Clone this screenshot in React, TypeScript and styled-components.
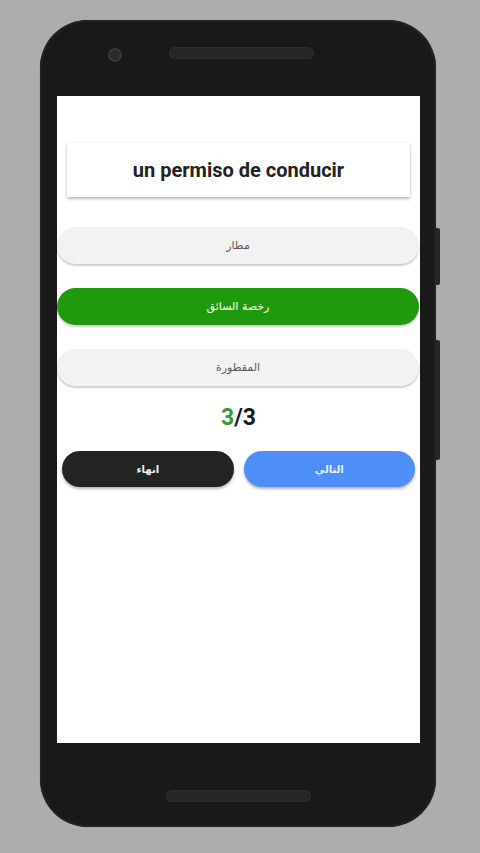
import React from 'react'
import styled, { createGlobalStyle } from 'styled-components'

const GlobalStyle = createGlobalStyle`
    html, body {
        margin: 0;
        padding: 0;
        background: #adadad;
        font-family: Roboto, "Noto Sans", "DejaVu Sans", sans-serif;
    }
`

interface IOption {
    label: string
    correct?: boolean
}

const options: IOption[] = [
    { label: 'مطار' },
    { label: 'رخصة السائق', correct: true },
    { label: 'المقطورة' },
]

export default function App() {
    return (
        <Page>
            <GlobalStyle />
            <Phone>
                <SideButton $top={208} $height={57} />
                <SideButton $top={320} $height={120} />

                <TopBezel>
                    <Camera />
                    <Speaker />
                </TopBezel>

                <Screen>
                    <WordCard>un permiso de conducir</WordCard>

                    <OptionList>
                        {options.map((option) => (
                            <OptionButton key={option.label} $correct={option.correct}>
                                {option.label}
                            </OptionButton>
                        ))}
                    </OptionList>

                    <Counter>
                        <span className='current'>3</span>/3
                    </Counter>

                    <ActionRow>
                        <ActionButton $variant='dark'>انهاء</ActionButton>
                        <ActionButton $variant='blue'>التالي</ActionButton>
                    </ActionRow>
                </Screen>

                <BottomBezel>
                    <Speaker />
                </BottomBezel>
            </Phone>
        </Page>
    )
}

const Page = styled.div`
    display: flex;
    justify-content: flex-start;
    width: 480px;
    height: 853px;
    padding: 20px 0 0 40px;
    box-sizing: border-box;
    overflow: hidden;
`

const Phone = styled.div`
    position: relative;
    display: flex;
    flex-direction: column;
    width: 396px;
    height: 807px;
    padding: 0 16px 0 17px;
    box-sizing: border-box;
    background: #191919;
    border-radius: 48px;
    box-shadow: inset 0 0 0 2px #222222, 0 0 1px rgba(0, 0, 0, 0.4);
`

const SideButton = styled.div<{ $top: number; $height: number }>`
    position: absolute;
    right: -4px;
    top: ${(p) => p.$top}px;
    width: 5px;
    height: ${(p) => p.$height}px;
    background: #242424;
    border-radius: 0 2px 2px 0;
`

const TopBezel = styled.div`
    display: flex;
    align-items: flex-start;
    height: 76px;
    padding: 27px 0 0 51px;
    box-sizing: border-box;
    gap: 47px;
`

const Camera = styled.div`
    width: 10px;
    height: 10px;
    margin-top: 1px;
    border-radius: 50%;
    background: #2b2b2b;
    border: 2px solid #383838;
`

const Speaker = styled.div`
    width: 145px;
    height: 12px;
    border-radius: 6px;
    background: #262626;
    box-shadow: inset 0 0 0 1px #2e2e2e;
`

const Screen = styled.div`
    display: flex;
    flex-direction: column;
    align-items: stretch;
    height: 647px;
    padding-top: 47px;
    box-sizing: border-box;
    background: #ffffff;
`

const WordCard = styled.div`
    display: flex;
    justify-content: center;
    align-items: center;
    height: 54px;
    margin: 0 10px;
    background: #ffffff;
    font-family: Roboto, "Liberation Sans", sans-serif;
    font-size: 20px;
    font-weight: 700;
    color: #222222;
    box-shadow: 0 2px 3px rgba(0, 0, 0, 0.25), 0 0 2px rgba(0, 0, 0, 0.08);
`

const OptionList = styled.div`
    display: flex;
    flex-direction: column;
    gap: 24px;
    margin: 30px 1px 0 0;
`

const OptionButton = styled.div<{ $correct?: boolean }>`
    display: flex;
    justify-content: center;
    align-items: center;
    height: 37px;
    border-radius: 19px;
    background: ${(p) => (p.$correct ? '#1f9a0e' : '#f2f2f2')};
    color: ${(p) => (p.$correct ? '#f4fff0' : '#5a5a5a')};
    font-family: "DejaVu Sans", sans-serif;
    font-size: 11px;
    direction: rtl;
    box-shadow: 0 2px 2px rgba(0, 0, 0, 0.2);
`

const Counter = styled.div`
    display: flex;
    justify-content: center;
    margin-top: 19px;
    font-family: Roboto, "Liberation Sans", sans-serif;
    font-size: 23px;
    font-weight: 700;
    line-height: 26px;
    color: #1a1a1a;

    .current {
        color: #3a9a2f;
    }
`

const ActionRow = styled.div`
    display: grid;
    grid-template-columns: 1fr 1fr;
    gap: 10px;
    margin: 20px 5px 0 5px;
`

const ActionButton = styled.div<{ $variant: 'dark' | 'blue' }>`
    display: flex;
    justify-content: center;
    align-items: center;
    height: 36px;
    border-radius: 18px;
    background: ${(p) => (p.$variant === 'dark' ? '#232323' : '#4d8ef7')};
    color: ${(p) => (p.$variant === 'dark' ? '#f0f0f0' : '#e8efff')};
    font-family: "DejaVu Sans", sans-serif;
    font-size: 10px;
    font-weight: 700;
    direction: rtl;
    box-shadow: 0 2px 3px rgba(0, 0, 0, 0.3);
`

const BottomBezel = styled.div`
    display: flex;
    justify-content: center;
    align-items: flex-start;
    flex: 1;
    padding: 47px 0 0 0;
    box-sizing: border-box;
`
